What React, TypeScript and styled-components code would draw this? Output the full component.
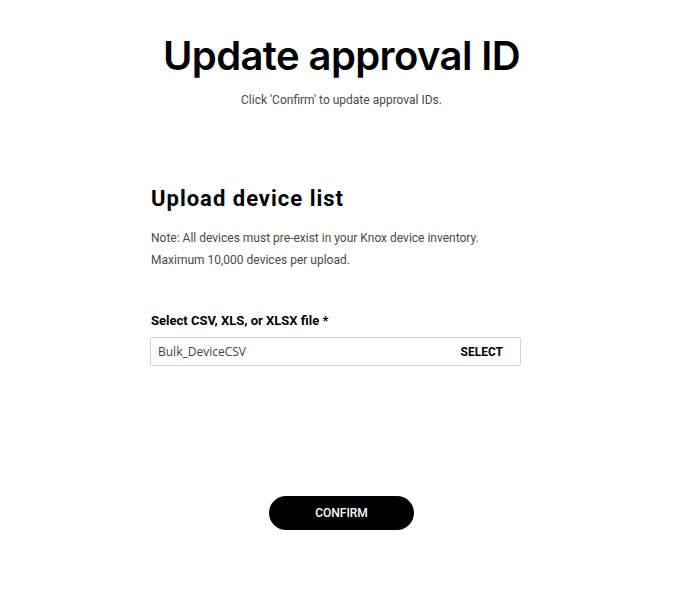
import React from "react";
import styled, { createGlobalStyle } from "styled-components";

const Global = createGlobalStyle`
  html, body { margin: 0; padding: 0; background: #fff; }
  body { font-family: Roboto, "Liberation Sans", sans-serif; }
`;

const Page = styled.main`
  width: 683px;
  display: flex;
  flex-direction: column;
  align-items: center;
  padding-top: 31px;
`;

const Title = styled.h1`
  margin: 0;
  font-family: Inter, "Liberation Sans", sans-serif;
  font-weight: 600;
  font-size: 40px;
  line-height: 50px;
  letter-spacing: -0.6px;
  color: #000;
`;

const Subtitle = styled.p`
  margin: 10px 0 0;
  font-size: 12px;
  line-height: 18px;
  color: #4a4a4a;
`;

const Section = styled.section`
  width: 371px;
  margin-top: 76px;
  margin-left: -12px;
  display: flex;
  flex-direction: column;
`;

const SectionTitle = styled.h2`
  margin: 0;
  font-size: 22px;
  line-height: 28px;
  font-weight: 700;
  letter-spacing: 1px;
  color: #000;
  padding-left: 1px;
`;

const Note = styled.p`
  margin: 0;
  font-size: 12px;
  line-height: 22px;
  color: #4a4a4a;
  padding-left: 1px;
`;

const Notes = styled.div`
  margin-top: 14px;
`;

const Label = styled.label`
  margin-top: 41px;
  font-size: 13px;
  font-weight: 700;
  line-height: 18px;
  color: #000;
  padding-left: 1px;
`;

const FileField = styled.div`
  margin-top: 7px;
  height: 29px;
  box-sizing: border-box;
  border: 1px solid #d4d4d4;
  border-radius: 2px;
  display: flex;
  align-items: center;
  justify-content: space-between;
  padding: 0 17px 0 7px;
`;

const FileName = styled.span`
  font-family: "Open Sans", "Liberation Sans", sans-serif;
  font-size: 12px;
  color: #444;
`;

const SelectButton = styled.button`
  border: none;
  background: none;
  padding: 0;
  font-family: Roboto, "Liberation Sans", sans-serif;
  font-size: 12px;
  font-weight: 700;
  color: #000;
  cursor: pointer;
`;

const ConfirmButton = styled.button`
  margin-top: 130px;
  width: 145px;
  height: 34px;
  border: none;
  border-radius: 17px;
  background: #000;
  color: #fff;
  font-family: Roboto, "Liberation Sans", sans-serif;
  font-size: 12px;
  font-weight: 500;
  cursor: pointer;
`;

export default function App() {
  return (
    <>
      <Global />
      <Page>
        <Title>Update approval ID</Title>
        <Subtitle>Click 'Confirm' to update approval IDs.</Subtitle>
        <Section>
          <SectionTitle>Upload device list</SectionTitle>
          <Notes>
            <Note>Note: All devices must pre-exist in your Knox device inventory.</Note>
            <Note>Maximum 10,000 devices per upload.</Note>
          </Notes>
          <Label>Select CSV, XLS, or XLSX file *</Label>
          <FileField>
            <FileName>Bulk_DeviceCSV</FileName>
            <SelectButton>SELECT</SelectButton>
          </FileField>
        </Section>
        <ConfirmButton>CONFIRM</ConfirmButton>
      </Page>
    </>
  );
}
